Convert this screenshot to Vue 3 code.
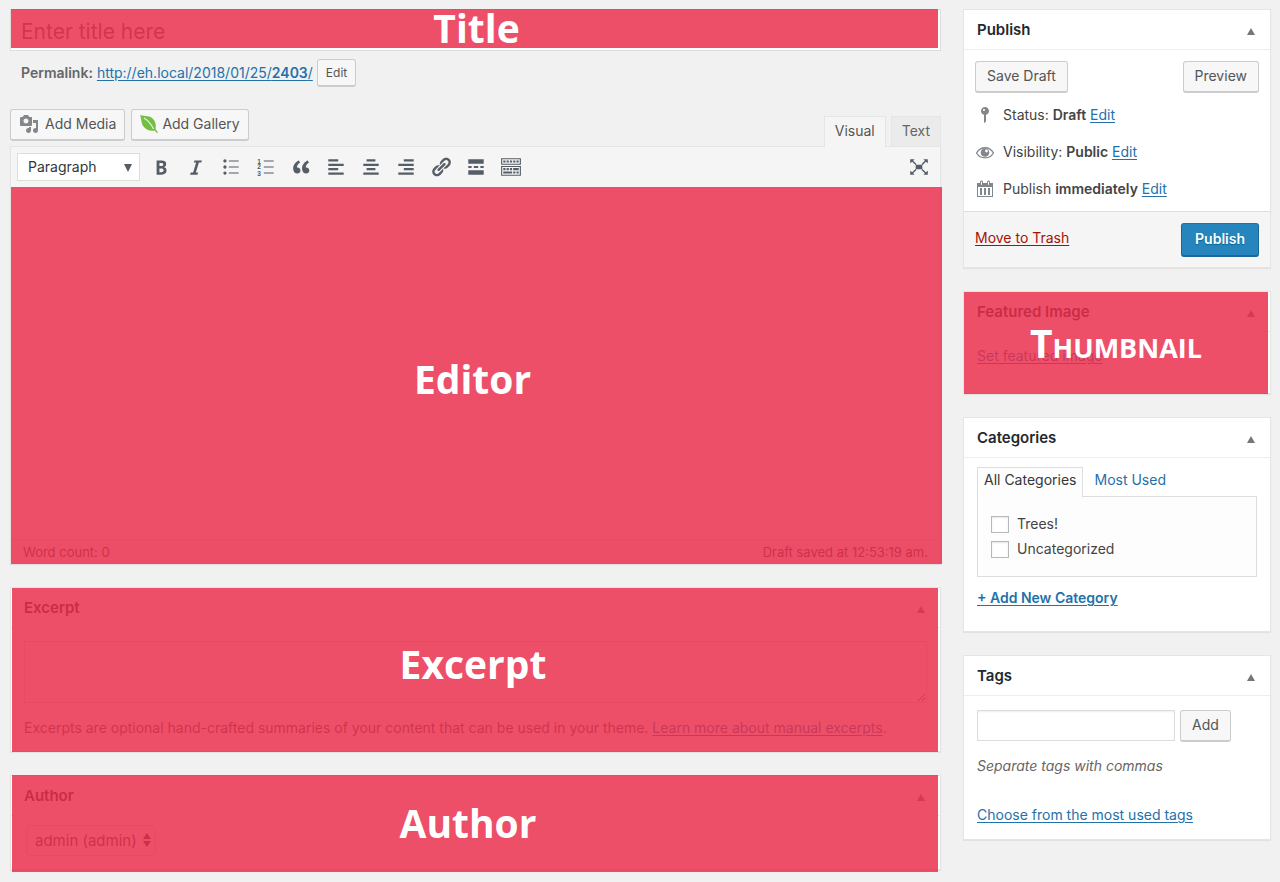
<script setup>
import { ref } from 'vue'

const title = ref('')
const excerpt = ref('')
const newTag = ref('')
const categories = ref([
  { id: 'cat-trees', name: 'Trees!', checked: false },
  { id: 'cat-uncategorized', name: 'Uncategorized', checked: false },
])

const alignRows = 'M3 7h14v2H3zM3 15h14v2H3z'
const tools = [
  { name: 'Bold', d: 'M6 4v13h4.54c1.37 0 2.46-.33 3.26-1 .8-.66 1.2-1.58 1.2-2.77 0-.84-.17-1.51-.51-2.01s-.9-.85-1.67-1.03v-.09c.57-.1 1.02-.4 1.36-.9s.51-1.13.51-1.91c0-1.14-.39-1.98-1.17-2.5C12.75 4.26 11.5 4 9.78 4H6zm2.57 5.15V6.26h1.36c.73 0 1.27.11 1.61.32.34.22.51.58.51 1.07 0 .54-.16.92-.47 1.15s-.82.35-1.51.35h-1.5zm0 2.19h1.6c1.44 0 2.16.53 2.16 1.61 0 .6-.17 1.05-.51 1.34s-.86.43-1.57.43H8.57v-3.38z' },
  { name: 'Italic', d: 'M14.78 6h-2.13l-2.8 9h2.12l-.62 2H4.6l.62-2h2.14l2.8-9H8.03l.62-2h6.75z' },
  { name: 'Bulleted list', d: 'M4.5 3a1.5 1.5 0 1 0 0 3 1.5 1.5 0 0 0 0-3zM4.5 8.5a1.5 1.5 0 1 0 0 3 1.5 1.5 0 0 0 0-3zM4.5 14a1.5 1.5 0 1 0 0 3 1.5 1.5 0 0 0 0-3zM8 4h9v1H8zM8 9.5h9v1H8zM8 15h9v1H8z' },
  { name: 'Numbered list', d: 'M8 4h9v1H8zM8 9.5h9v1H8zM8 15h9v1H8z', numbers: true },
  { name: 'Blockquote', d: 'M9.49 13.22c0-.74-.2-1.38-.61-1.9-.62-.78-1.83-.88-2.53-.72-.29-1.65 1.11-3.75 2.92-4.65L7.88 4c-2.73 1.3-5.42 4.28-4.96 8.05C3.21 14.43 4.59 16 6.54 16c.85 0 1.56-.25 2.12-.75s.83-1.18.83-2.03zm8.05 0c0-.74-.2-1.38-.61-1.9-.63-.78-1.83-.88-2.53-.72-.29-1.65 1.11-3.75 2.92-4.65L15.93 4c-2.73 1.3-5.41 4.28-4.95 8.05.29 2.38 1.66 3.95 3.61 3.95.85 0 1.56-.25 2.12-.75s.83-1.18.83-2.03z' },
  { name: 'Align left', d: alignRows + 'M3 3h9v2H3zM3 11h9v2H3z' },
  { name: 'Align center', d: alignRows + 'M6 3h8v2H6zM6 11h8v2H6z' },
  { name: 'Align right', d: alignRows + 'M8 3h9v2H8zM8 11h9v2H8z' },
  { name: 'Insert link', d: 'M17.74 2.76c1.68 1.69 1.68 4.41 0 6.1l-1.53 1.52c-1.12 1.12-2.7 1.47-4.14 1.09l2.62-2.61.76-.77.76-.76c.84-.84.84-2.2 0-3.04-.84-.85-2.2-.85-3.04 0l-.77.76-3.38 3.38c-.37-1.44-.02-3.02 1.1-4.14l1.52-1.53c1.69-1.68 4.42-1.68 6.1 0zM8.59 13.43l5.34-5.34c.42-.42.42-1.1 0-1.52-.44-.43-1.13-.39-1.53 0l-5.33 5.34c-.42.42-.42 1.1 0 1.52.44.43 1.13.39 1.52 0zm-.76 2.29l4.14-4.15c.38 1.44.03 3.02-1.09 4.14l-1.52 1.53c-1.69 1.68-4.41 1.68-6.1 0-1.68-1.68-1.68-4.42 0-6.1l1.53-1.52c1.12-1.12 2.7-1.47 4.14-1.1l-4.14 4.15c-.85.84-.85 2.2 0 3.05.84.84 2.2.84 3.04 0z' },
  { name: 'Read more', d: 'M17 7V3H3v4h14zM6 11V9H3v2h3zm6 0V9H8v2h4zm5 0V9h-3v2h3zm0 6v-4H3v4h14z' },
  { name: 'Toolbar toggle', d: 'M19 2v6H1V2h18zm-1 5V3H2v4h16zM5 4v2H3V4h2zm3 0v2H6V4h2zm3 0v2H9V4h2zm3 0v2h-2V4h2zm3 0v2h-2V4h2zm2 5v9H1V9h18zm-1 8v-7H2v7h16zM5 11v2H3v-2h2zm3 0v2H6v-2h2zm3 0v2H9v-2h2zm6 0v2h-5v-2h5zm-6 3v2H3v-2h8zm3 0v2h-2v-2h2zm3 0v2h-2v-2h2z' },
]
</script>

<template>
  <div class="page">
    <main class="main">
      <section class="title-field">
        <input v-model="title" class="title-input" type="text" placeholder="Enter title here" aria-label="Title" />
        <div class="cover cover-title"><span>Title</span></div>
      </section>

      <div class="permalink">
        <strong>Permalink:</strong>
        <a href="#">http://eh.local/2018/01/25/<b>2403</b>/</a>
        <button type="button" class="button small">Edit</button>
      </div>

      <div class="editor-top">
        <div class="media">
          <button type="button" class="button with-icon">
            <svg class="media-icon" viewBox="0 0 20 20" fill="#82878c"><path d="M13 11V4c0-.55-.45-1-1-1h-1.670L9 1H5L3.670 3H2c-.55 0-1 .45-1 1v7c0 .55.45 1 1 1h10c.55 0 1-.45 1-1zM7 4.500c1.380 0 2.500 1.120 2.500 2.500S8.380 9.500 7 9.500 4.500 8.380 4.500 7 5.620 4.500 7 4.500zM14 6h5v10.500c0 1.380-1.120 2.500-2.500 2.500S14 17.880 14 16.500s1.120-2.500 2.500-2.500c.17 0 .34.020.5.050V9h-3V6zm-4 8.050V13h2v3.500c0 1.380-1.120 2.500-2.500 2.500S7 17.880 7 16.500 8.120 14 9.500 14c.17 0 .34.020.5.050z" /></svg>
            Add Media
          </button>
          <button type="button" class="button with-icon leaf">
            <svg class="media-icon" viewBox="1 0 18 20">
              <path d="M1 1c5 1.500 10.500 0 14 5 2 3 2 6.500 1.500 9l2.500 3.500-1 .5-2.500-2.500c-4 .8-8.500-.5-11-4C2 9 2.500 4.500 1 1z" fill="#72bf44" />
              <path d="M5 4c4 2.500 7.500 6.500 9.500 11" fill="none" stroke="#e4f4d9" stroke-width="1.200" />
            </svg>
            Add Gallery
          </button>
        </div>
        <div class="tabs">
          <button type="button" class="tab active">Visual</button>
          <button type="button" class="tab">Text</button>
        </div>
      </div>

      <section class="editor">
        <div class="toolbar">
          <div class="format">
            <select aria-label="Format"><option>Paragraph</option></select>
            <svg viewBox="0 0 10 10" fill="#555d66"><path d="M1 1h8L5 9z" /></svg>
          </div>
          <div class="tools">
            <button v-for="tool in tools" :key="tool.name" type="button" class="tool" :aria-label="tool.name">
              <svg viewBox="0 0 20 20" fill="currentColor">
                <path :d="tool.d" />
                <g v-if="tool.numbers" class="digits">
                  <text x="2" y="7">1</text>
                  <text x="2" y="12">2</text>
                  <text x="2" y="18">3</text>
                </g>
              </svg>
            </button>
          </div>
          <button type="button" class="tool expand" aria-label="Distraction-free writing mode">
            <svg viewBox="0 0 20 20" fill="currentColor">
              <path d="M7 8h6v4H7zM2 3h4L4.700 4.300l3 3-.9.9-3-3L2 6.500zM18 3h-4l1.300 1.300-3 3 .9.9 3-3L18 6.500zM2 17h4l-1.300-1.300 3-3-.9-.9-3 3L2 13.500zM18 17h-4l1.300-1.300-3-3 .9-.9 3 3L18 13.500z" />
            </svg>
          </button>
        </div>
        <div class="canvas">
          <div class="status-line">
            <span>Word count: 0</span>
            <span>Draft saved at 12:53:19 am.</span>
          </div>
          <div class="cover cover-editor"><span>Editor</span></div>
        </div>
      </section>

      <section class="box">
        <header class="box-head"><h2>Excerpt</h2><i class="toggle"></i></header>
        <div class="excerpt-body">
          <textarea v-model="excerpt" aria-label="Excerpt"></textarea>
          <p>Excerpts are optional hand-crafted summaries of your content that can be used in your theme. <a href="#">Learn more about manual excerpts</a>.</p>
        </div>
        <div class="cover cover-box"><span>Excerpt</span></div>
      </section>

      <section class="box">
        <header class="box-head"><h2>Author</h2><i class="toggle"></i></header>
        <div class="author-body">
          <div class="author">
            <select aria-label="Author"><option>admin (admin)</option></select>
            <svg viewBox="0 0 8 14" fill="#32373c"><path d="M4 0l4 6H0zM0 8h8l-4 6z" /></svg>
          </div>
        </div>
        <div class="cover cover-author"><span>Author</span></div>
      </section>
    </main>

    <aside class="side">
      <section class="box">
        <header class="box-head"><h2>Publish</h2><i class="toggle"></i></header>
        <div class="publish-body">
          <div class="row-between">
            <button type="button" class="button">Save Draft</button>
            <button type="button" class="button">Preview</button>
          </div>
          <ul class="facts">
            <li>
              <svg viewBox="0 0 20 20" fill="#82878c"><path d="M14 6c0 1.860-1.280 3.410-3 3.860V16c0 1-2 2-2 2V9.860c-1.720-.45-3-2-3-3.860 0-2.210 1.790-4 4-4s4 1.790 4 4zM8 5c0 .55.45 1 1 1s1-.45 1-1-.45-1-1-1-1 .45-1 1z" /></svg>
              <span>Status: <b>Draft</b> <a href="#">Edit</a></span>
            </li>
            <li>
              <svg viewBox="0 0 20 20">
                <path d="M1.500 11C5.500 4 14.500 4 18.500 11 14.500 17.500 5.500 17.500 1.500 11z" fill="none" stroke="#82878c" stroke-width="1.300" />
                <circle cx="10" cy="10.500" r="4.300" fill="#82878c" />
                <circle cx="11.500" cy="9" r="1.400" fill="#fff" />
              </svg>
              <span>Visibility: <b>Public</b> <a href="#">Edit</a></span>
            </li>
            <li>
              <svg viewBox="0 0 20 20" fill="#82878c"><path d="M15 4h3v14H2V4h3V3c0-.83.67-1.500 1.500-1.500S8 2.170 8 3v1h4V3c0-.83.67-1.500 1.500-1.500S15 2.170 15 3v1zM6 3v2.500c0 .28.22.5.5.5s.5-.22.5-.5V3c0-.28-.22-.5-.5-.5S6 2.720 6 3zm7 0v2.500c0 .28.22.5.5.5s.5-.22.5-.5V3c0-.28-.22-.5-.5-.5s-.5.22-.5.5zm4 14V8H3v9h14zM7 16V9H5v7h2zm4 0V9H9v7h2zm4 0V9h-2v7h2z" /></svg>
              <span>Publish <b>immediately</b> <a href="#">Edit</a></span>
            </li>
          </ul>
        </div>
        <footer class="publish-foot">
          <a href="#" class="trash">Move to Trash</a>
          <button type="button" class="button primary">Publish</button>
        </footer>
      </section>

      <section class="box">
        <header class="box-head"><h2>Featured Image</h2><i class="toggle"></i></header>
        <div class="featured-body"><a href="#">Set featured image</a></div>
        <div class="cover cover-thumb"><span>Thumbnail</span></div>
      </section>

      <section class="box">
        <header class="box-head"><h2>Categories</h2><i class="toggle"></i></header>
        <div class="cat-body">
          <div class="cat-tabs">
            <button type="button" class="cat-tab active">All Categories</button>
            <button type="button" class="cat-tab">Most Used</button>
          </div>
          <div class="cat-list">
            <label v-for="cat in categories" :key="cat.id" :for="cat.id">
              <input :id="cat.id" v-model="cat.checked" type="checkbox" />
              {{ cat.name }}
            </label>
          </div>
          <a href="#" class="add-cat">+ Add New Category</a>
        </div>
      </section>

      <section class="box">
        <header class="box-head"><h2>Tags</h2><i class="toggle"></i></header>
        <div class="tags-body">
          <div class="tag-entry">
            <input v-model="newTag" type="text" aria-label="Add new tag" />
            <button type="button" class="button">Add</button>
          </div>
          <p>Separate tags with commas</p>
          <a href="#">Choose from the most used tags</a>
        </div>
      </section>
    </aside>
  </div>
</template>

<style>
body {
  background: #f1f1f1;
}
</style>

<style scoped>
.page,
.page * {
  box-sizing: border-box;
}
.page {
  display: grid;
  grid-template-columns: minmax(0, 1fr) 308px;
  gap: 22px;
  padding: 9px 9px 10px 10px;
  font: 14px/20px Inter, "Liberation Sans", sans-serif;
  color: #444;
}
button,
input,
select,
textarea {
  font: inherit;
  color: inherit;
}
a {
  color: #2371ab;
  text-underline-offset: 2px;
}
b,
strong {
  font-weight: 600;
}
h2,
p,
ul {
  margin: 0;
  padding: 0;
}
h2 {
  font-size: 15px;
  line-height: 20px;
  font-weight: 600;
  color: #23282d;
}

.button {
  height: 32px;
  padding: 0 11px 2px;
  border: 1px solid #ccc;
  border-bottom-width: 2px;
  border-radius: 3px;
  background: #f7f7f7;
  color: #555;
  white-space: nowrap;
}
.button.small {
  height: 28px;
  padding: 0 8px;
  font-size: 12px;
}
.button.primary {
  height: 34px;
  padding: 0 13px 1px;
  border-color: #1d73aa #1a6799 #1a6799;
  background: #2585bc;
  color: #fff;
  font-weight: 600;
  text-shadow: 0 1px 1px #006799;
}
.button.with-icon {
  display: flex;
  align-items: center;
  gap: 6px;
  padding: 0 8px 2px;
}
.button.leaf {
  gap: 4px;
}
.media-icon {
  width: 20px;
  height: 20px;
}
.leaf .media-icon {
  width: 18px;
}

.cover {
  position: absolute;
  display: flex;
  align-items: center;
  justify-content: center;
  background: rgba(234, 45, 75, 0.84);
  color: #fff;
  font: 700 39px/40px "Open Sans", "Noto Sans", sans-serif;
  pointer-events: none;
}
.cover-title {
  inset: 0 3px 3px 1px;
  padding: 0 0 2px 4px;
}
.cover-editor {
  inset: 0 -2px 0 0;
  padding: 6px 8px 0 0;
}
.cover-box {
  inset: 0 2px -1px 1px;
  padding: 0 4px 12px 0;
}
.cover-author {
  inset: -1px 2px -3px 1px;
  padding: 0 14px 2px 0;
}
.cover-thumb {
  inset: 0 2px -1px 0;
  font-variant: small-caps;
}

.title-field {
  position: relative;
}
.title-input {
  display: block;
  width: 100%;
  height: 42px;
  padding: 3px 10px 0;
  border: 1px solid #ddd;
  background: #fff;
  font-size: 21px;
}
.title-input::placeholder {
  color: #555d66;
  opacity: 1;
}

.permalink {
  display: flex;
  align-items: center;
  gap: 4px;
  margin-top: 8px;
  padding-left: 11px;
  color: #666;
}
.editor-top {
  display: flex;
  justify-content: space-between;
  align-items: flex-end;
  height: 37px;
  margin-top: 22px;
}
.media {
  display: flex;
  gap: 6px;
  align-self: flex-start;
}
.tabs {
  display: flex;
  gap: 5px;
}
.tab {
  height: 30px;
  padding: 0 10px 2px;
  border: 1px solid #e5e5e5;
  border-bottom: 0;
  background: #ebebeb;
  color: #666;
}
.tab.active {
  height: 31px;
  margin-bottom: -1px;
  padding-bottom: 3px;
  background: #f5f5f5;
  color: #555;
  z-index: 1;
}
.editor {
  border: 1px solid #e5e5e5;
  border-bottom: 0;
  box-shadow: 0 1px 1px rgba(0, 0, 0, 0.08);
}
.toolbar {
  display: flex;
  align-items: center;
  height: 40px;
  padding: 0 10px 0 6px;
  background: #f5f5f5;
}
.format {
  position: relative;
  width: 123px;
  margin-right: 3px;
}
.format select {
  width: 100%;
  height: 28px;
  padding: 0 10px;
  border: 1px solid #ddd;
  border-radius: 0;
  background: #fff;
  color: #32373c;
  appearance: none;
}
.format svg {
  position: absolute;
  right: 7px;
  top: 10px;
  width: 10px;
  height: 10px;
}
.tools {
  display: flex;
}
.tool {
  display: grid;
  place-items: center;
  width: 35px;
  height: 32px;
  padding: 0;
  border: 0;
  background: none;
  color: #555d66;
}
.tool svg {
  width: 22px;
  height: 22px;
}
.expand {
  width: 22px;
  margin-left: auto;
}
.digits {
  font: 700 6px "Liberation Sans", sans-serif;
}
.canvas {
  position: relative;
  display: flex;
  align-items: flex-end;
  height: 377px;
  background: #fff;
}
.status-line {
  display: flex;
  justify-content: space-between;
  width: 100%;
  height: 25px;
  padding: 2px 12px 0;
  border-top: 1px solid #e5e5e5;
  background: #f7f7f7;
  font-size: 13px;
}

.box {
  position: relative;
  border: 1px solid #e5e5e5;
  background: #fff;
  box-shadow: 0 1px 1px rgba(0, 0, 0, 0.06);
}
.main .box {
  margin-top: 23px;
}
.side {
  display: flex;
  flex-direction: column;
  gap: 23px;
}
.box-head {
  display: flex;
  align-items: center;
  justify-content: space-between;
  height: 40px;
  padding: 0 15px 0 13px;
  border-bottom: 1px solid #eee;
}
.toggle {
  margin-top: 4px;
  border: 4px solid transparent;
  border-top: 0;
  border-bottom: 7px solid #72777c;
}
.excerpt-body {
  padding: 13px;
  color: #555;
}
.excerpt-body textarea {
  display: block;
  width: 100%;
  height: 62px;
  margin-bottom: 15px;
  border: 1px solid #ddd;
  background: #fff;
}
.author-body {
  padding: 9px 15px 13px;
}
.author {
  position: relative;
  width: 130px;
}
.author select {
  width: 100%;
  height: 31px;
  padding: 0 8px;
  border: 1px solid #ddd;
  border-radius: 5px;
  background: #fff;
  font-size: 15px;
  appearance: none;
}
.author svg {
  position: absolute;
  right: 5px;
  top: 8px;
  width: 8px;
  height: 14px;
}

.publish-body {
  padding: 11px;
}
.row-between {
  display: flex;
  justify-content: space-between;
}
.facts {
  display: grid;
  gap: 15px;
  margin-top: 11px;
  list-style: none;
}
.facts li {
  display: flex;
  align-items: center;
  gap: 8px;
  height: 22px;
}
.facts svg {
  width: 20px;
  height: 22px;
  overflow: visible;
}
.publish-foot {
  display: flex;
  align-items: center;
  justify-content: space-between;
  height: 56px;
  padding: 0 11px;
  border-top: 1px solid #ddd;
  background: #f5f5f5;
}
.trash {
  padding-bottom: 3px;
  color: #a31208;
}
.featured-body {
  height: 61px;
  padding: 14px 13px;
}
.cat-body {
  padding: 9px 13px 23px;
}
.cat-tabs {
  display: flex;
}
.cat-tab {
  height: 29px;
  padding: 0 10px 4px;
  border: 1px solid transparent;
  border-bottom: 0;
  background: none;
  color: #2371ab;
}
.cat-tab.active {
  height: 30px;
  margin-bottom: -1px;
  padding: 0 6px 5px;
  border-color: #ddd;
  background: #fdfdfd;
  color: #32373c;
  z-index: 1;
}
.cat-list {
  display: grid;
  gap: 5px;
  margin-bottom: 11px;
  padding: 17px 13px;
  border: 1px solid #ddd;
  background: #fdfdfd;
}
.cat-list label {
  display: flex;
  align-items: center;
  gap: 8px;
}
.cat-list input {
  width: 18px;
  height: 17px;
  margin: 0;
  border: 1px solid #b4b9be;
  background: #fff;
  box-shadow: inset 0 1px 2px rgba(0, 0, 0, 0.1);
  appearance: none;
}
.cat-list input:checked {
  background: #2371ab;
}
.add-cat {
  font-weight: 600;
}
.tags-body {
  padding: 14px 13px;
}
.tag-entry {
  display: flex;
  gap: 5px;
}
.tag-entry input {
  width: 198px;
  height: 31px;
  border: 1px solid #ddd;
  background: #fff;
  box-shadow: inset 0 1px 2px rgba(0, 0, 0, 0.07);
}
.tags-body p {
  margin: 14px 0 29px;
  color: #666;
  font-style: italic;
}
</style>
